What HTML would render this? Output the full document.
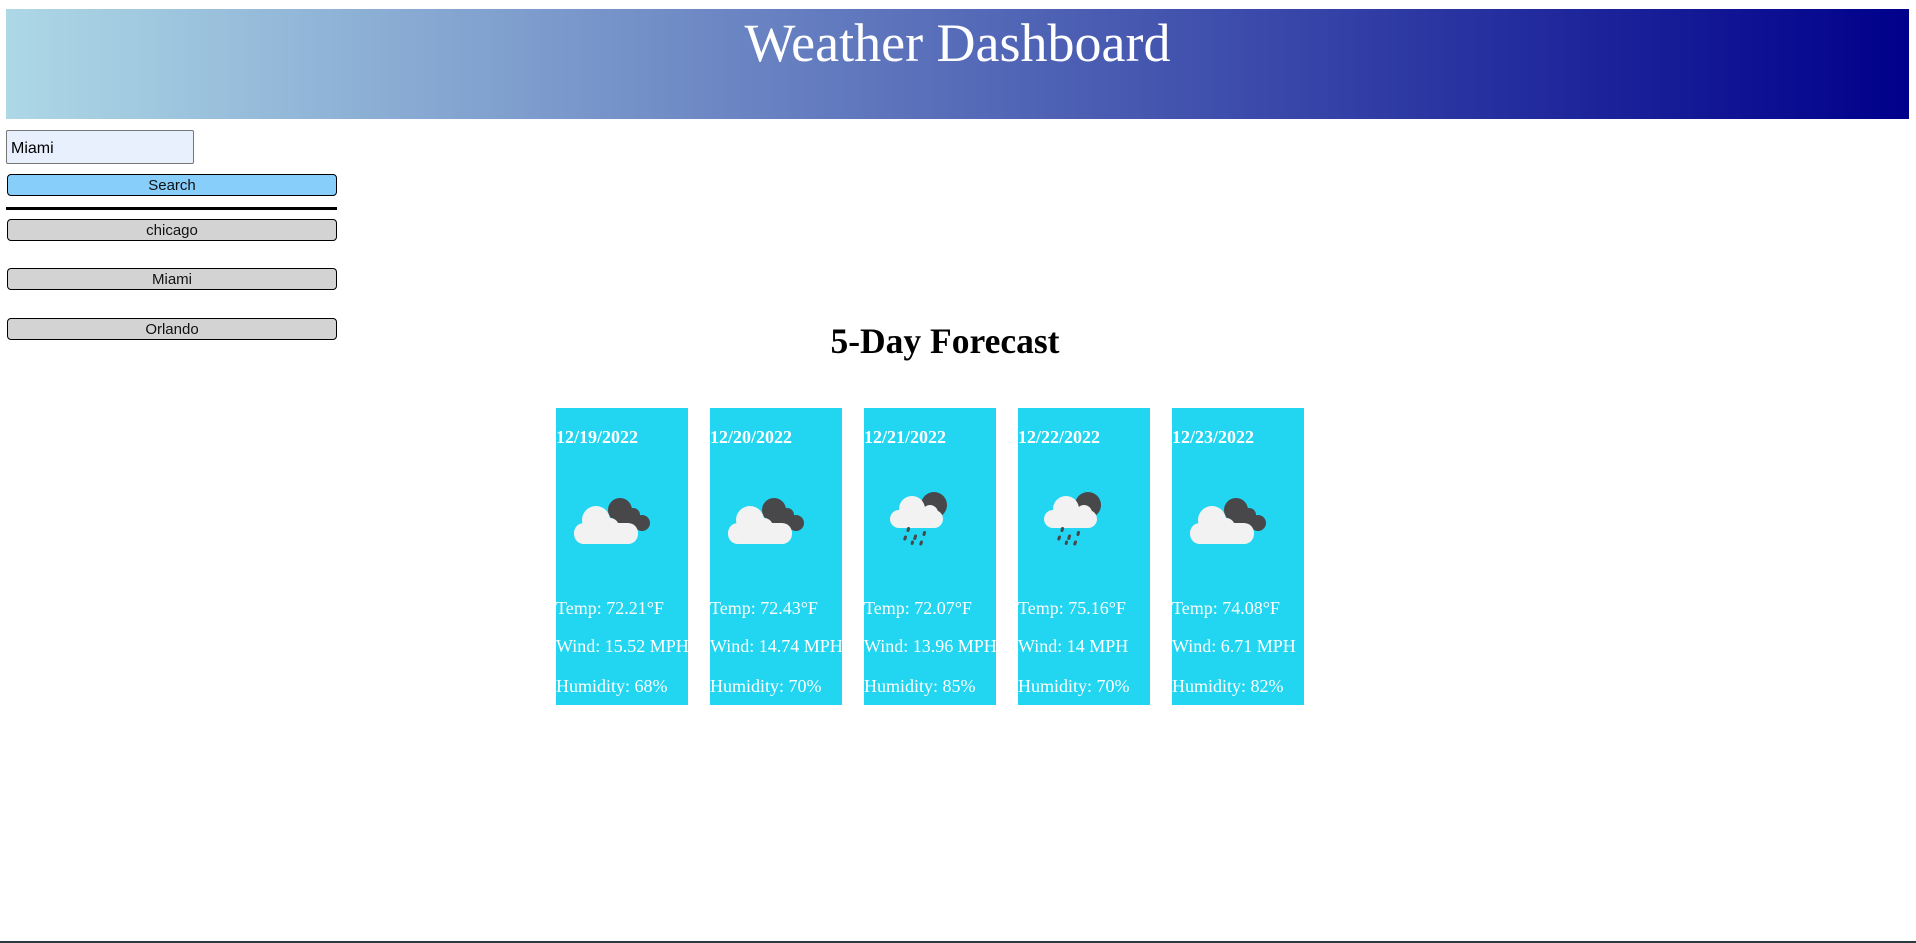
<!DOCTYPE html>
<html><head><meta charset="utf-8"><style>
*{margin:0;padding:0;box-sizing:border-box}
body{width:1916px;height:943px;background:#fff;position:relative;overflow:hidden;font-family:"Liberation Serif",serif}
.hdr{position:absolute;left:6px;top:9px;width:1903px;height:110px;background:linear-gradient(to right,#add8e6,#00008b)}
.hdr h1{position:absolute;left:0;right:0;top:4px;text-align:center;color:#fff;font-weight:normal;font-size:54px;line-height:60px}
.in{position:absolute;left:6px;top:130px;width:188px;height:34px;background:#e8f0fe;border:1px solid #767676;border-radius:2px;font-family:"Liberation Sans",sans-serif;font-size:16px;padding:9px 4px 0}
.btn{position:absolute;left:7px;width:330px;height:22px;border:1px solid #000;border-radius:4px;background:#d3d3d3;font-family:"Liberation Sans",sans-serif;font-size:15px;text-align:center;line-height:21px;color:#111}
.hr{position:absolute;left:6px;top:207px;width:331px;height:3px;background:#000}
h2{position:absolute;left:0;width:1890px;top:319px;text-align:center;font-size:35.5px;line-height:44px;font-weight:bold}
.card{position:absolute;top:408px;width:132px;height:297px;background:#22d5f0;color:#fff;font-size:18px}
.card b{position:absolute;left:0;top:19px;font-size:18px}
.card p{position:absolute;left:0;white-space:nowrap}
.card svg{position:absolute;left:0;top:80px}
.bot{position:absolute;left:0;top:941px;width:1916px;height:2px;background:#2a3a40}
</style></head><body>
<div class="hdr"><h1>Weather Dashboard</h1></div>
<div class="in">Miami</div>
<div class="btn" style="top:174px;background:#87cefa">Search</div>
<div class="hr"></div>
<div class="btn" style="top:219px">chicago</div>
<div class="btn" style="top:268px">Miami</div>
<div class="btn" style="top:318px">Orlando</div>
<h2>5-Day Forecast</h2>

<div class="card" style="left:556px"><b>12/19/2022</b>
<svg width="100" height="70" viewBox="0 0 100 70"><g fill="#48484a"><circle cx="64" cy="22" r="12"/><circle cx="77" cy="27" r="7"/><circle cx="86" cy="35" r="8"/><rect x="55" y="27" width="32" height="15" rx="7"/></g><g fill="#f2f2f2"><circle cx="40" cy="32" r="14"/><circle cx="54" cy="39" r="9"/><rect x="18" y="35" width="64" height="21" rx="10"/></g></svg>
<p style="top:190px">Temp: 72.21°F</p><p style="top:228px">Wind: 15.52 MPH</p><p style="top:268px">Humidity: 68%</p></div>

<div class="card" style="left:710px"><b>12/20/2022</b>
<svg width="100" height="70" viewBox="0 0 100 70"><g fill="#48484a"><circle cx="64" cy="22" r="12"/><circle cx="77" cy="27" r="7"/><circle cx="86" cy="35" r="8"/><rect x="55" y="27" width="32" height="15" rx="7"/></g><g fill="#f2f2f2"><circle cx="40" cy="32" r="14"/><circle cx="54" cy="39" r="9"/><rect x="18" y="35" width="64" height="21" rx="10"/></g></svg>
<p style="top:190px">Temp: 72.43°F</p><p style="top:228px">Wind: 14.74 MPH</p><p style="top:268px">Humidity: 70%</p></div>

<div class="card" style="left:864px"><b>12/21/2022</b>
<svg width="100" height="70" viewBox="0 0 100 70"><circle cx="70" cy="17" r="13" fill="#48484a"/><g fill="#f2f2f2"><circle cx="48" cy="21" r="13"/><circle cx="66" cy="25" r="8"/><rect x="26" y="22" width="53" height="18" rx="9"/></g><g stroke="#48484a" stroke-width="3" stroke-linecap="round"><path d="M44.5 40.5l-.5 2M41.5 49l-.7 2M51.5 48l-.7 2.5M60.5 44.5l-.5 2M48.5 54l-.3 1.5M57.5 54l-.7 2"/></g></svg>
<p style="top:190px">Temp: 72.07°F</p><p style="top:228px">Wind: 13.96 MPH</p><p style="top:268px">Humidity: 85%</p></div>

<div class="card" style="left:1018px"><b>12/22/2022</b>
<svg width="100" height="70" viewBox="0 0 100 70"><circle cx="70" cy="17" r="13" fill="#48484a"/><g fill="#f2f2f2"><circle cx="48" cy="21" r="13"/><circle cx="66" cy="25" r="8"/><rect x="26" y="22" width="53" height="18" rx="9"/></g><g stroke="#48484a" stroke-width="3" stroke-linecap="round"><path d="M44.5 40.5l-.5 2M41.5 49l-.7 2M51.5 48l-.7 2.5M60.5 44.5l-.5 2M48.5 54l-.3 1.5M57.5 54l-.7 2"/></g></svg>
<p style="top:190px">Temp: 75.16°F</p><p style="top:228px">Wind: 14 MPH</p><p style="top:268px">Humidity: 70%</p></div>

<div class="card" style="left:1172px"><b>12/23/2022</b>
<svg width="100" height="70" viewBox="0 0 100 70"><g fill="#48484a"><circle cx="64" cy="22" r="12"/><circle cx="77" cy="27" r="7"/><circle cx="86" cy="35" r="8"/><rect x="55" y="27" width="32" height="15" rx="7"/></g><g fill="#f2f2f2"><circle cx="40" cy="32" r="14"/><circle cx="54" cy="39" r="9"/><rect x="18" y="35" width="64" height="21" rx="10"/></g></svg>
<p style="top:190px">Temp: 74.08°F</p><p style="top:228px">Wind: 6.71 MPH</p><p style="top:268px">Humidity: 82%</p></div>
<div class="bot"></div>
</body></html>
